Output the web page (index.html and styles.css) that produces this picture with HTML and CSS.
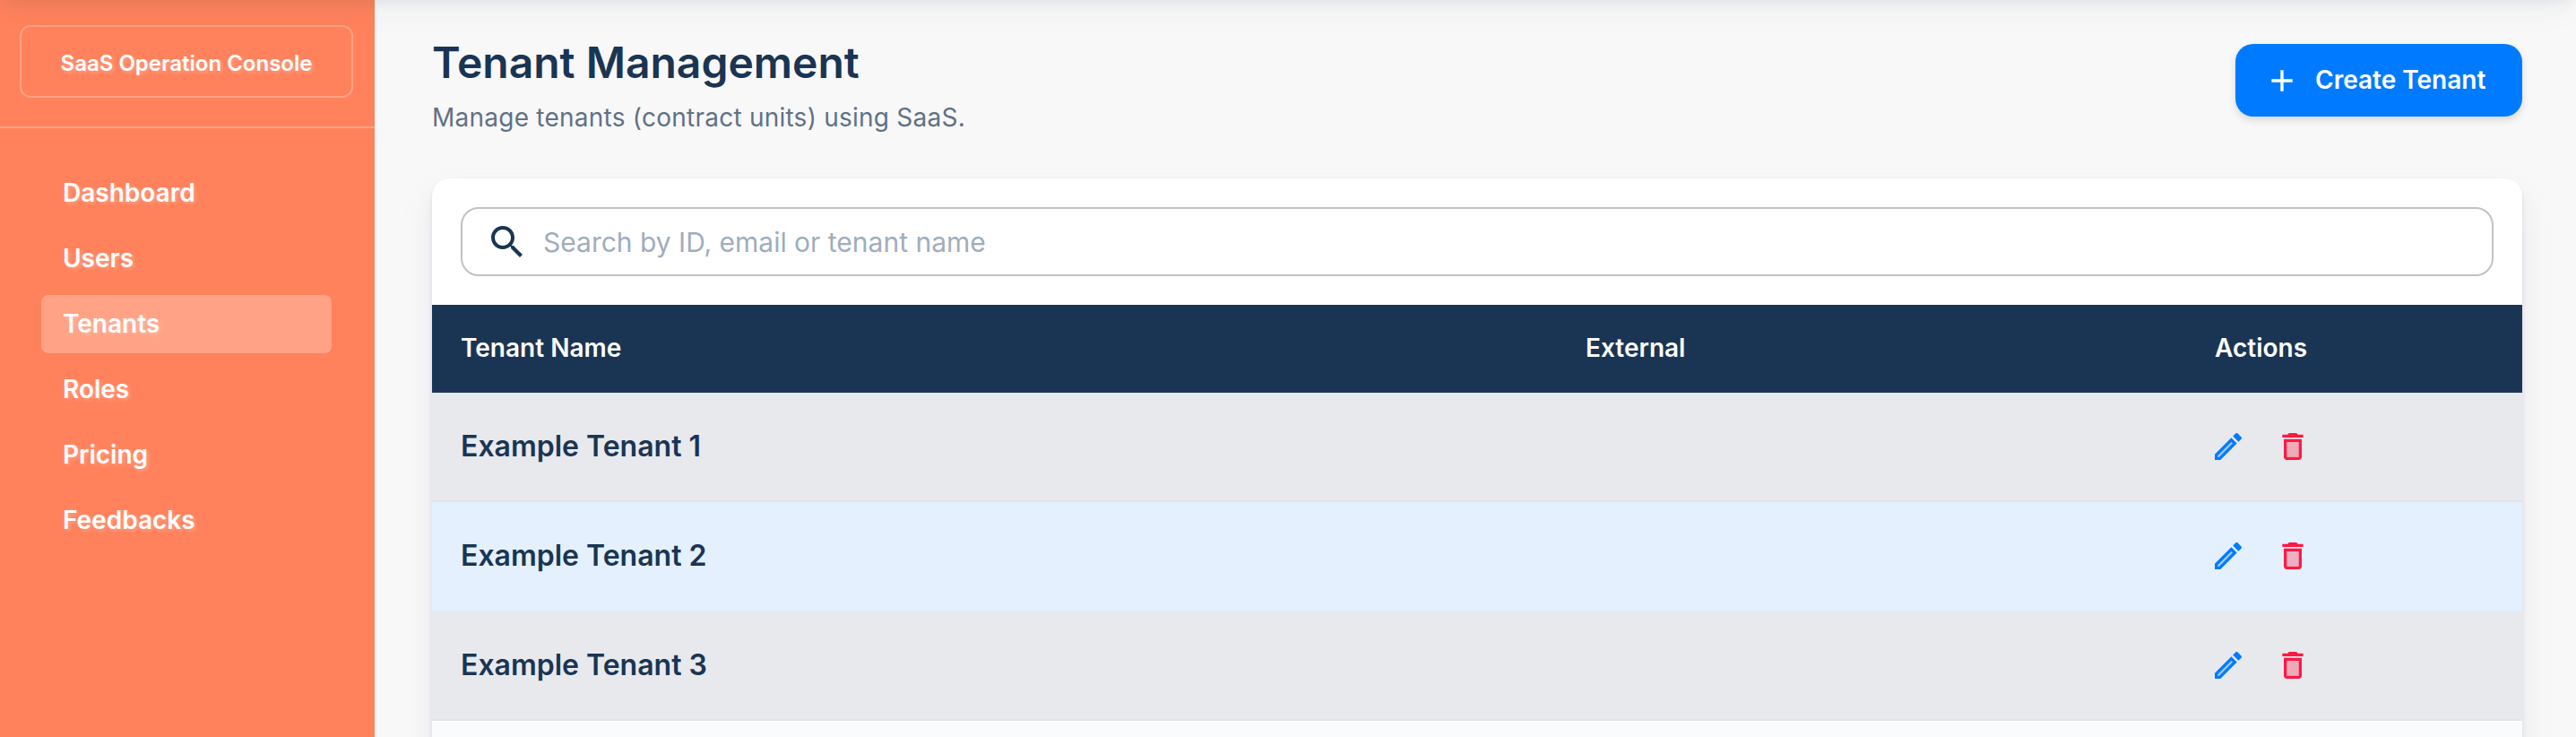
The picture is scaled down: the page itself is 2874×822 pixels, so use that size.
FILE: index.html
```html
<!DOCTYPE html>
<html lang="en">
<head>
<meta charset="utf-8">
<title>Tenant Management</title>
<link rel="stylesheet" href="styles.css">
</head>
<body>
<svg class="sprite" aria-hidden="true">
  <symbol id="edit" viewBox="0 0 24 24">
    <path opacity=".3" d="M5 18.08V19h.92l9.06-9.06-.92-.92z"/>
    <path d="M20.71 7.04a.996.996 0 0 0 0-1.41l-2.34-2.34c-.2-.2-.45-.29-.71-.29s-.51.1-.7.29l-1.83 1.83 3.75 3.75 1.83-1.83zM3 17.25V21h3.75L17.81 9.94l-3.75-3.75L3 17.25zM5.920 19H5v-.92l9.060-9.060.92.920L5.920 19z"/>
  </symbol>
  <symbol id="trash" viewBox="0 0 24 24">
    <path opacity=".3" d="M8 9h8v10H8z"/>
    <path d="M15.5 4l-1-1h-5l-1 1H5v2h14V4zM6 19c0 1.1.9 2 2 2h8c1.100 0 2-.9 2-2V7H6v12zM8 9h8v10H8V9z"/>
  </symbol>
</svg>
<div class="app">
  <div class="topbar"></div>
  <aside class="sidebar">
    <div class="brand"><div class="brand-box"><span>SaaS Operation Console</span></div></div>
    <nav class="nav">
      <a class="nav-item">Dashboard</a>
      <a class="nav-item">Users</a>
      <a class="nav-item active">Tenants</a>
      <a class="nav-item">Roles</a>
      <a class="nav-item">Pricing</a>
      <a class="nav-item">Feedbacks</a>
    </nav>
  </aside>
  <main class="main">
    <header class="page-head">
      <div>
        <h1 class="title"><span>Tenant Management</span></h1>
        <p class="subtitle"><span>Manage tenants (contract units) using SaaS.</span></p>
      </div>
      <button class="create">
        <svg class="icon" viewBox="0 0 24 24"><path d="M19 13h-6v6h-2v-6H5v-2h6V5h2v6h6v2z"/></svg>
        <span>Create Tenant</span>
      </button>
    </header>
    <section class="card">
      <div class="search-wrap">
        <div class="search">
          <svg class="search-icon" viewBox="0 0 24 24"><path d="M15.500 14h-.79l-.28-.27C15.410 12.590 16 11.110 16 9.500 16 5.910 13.090 3 9.500 3S3 5.910 3 9.500 5.910 16 9.500 16c1.610 0 3.090-.59 4.230-1.570l.27.28v.79l5 4.990L20.490 19l-4.990-5zm-6 0C7.010 14 5 11.990 5 9.500S7.010 5 9.500 5 14 7.010 14 9.500 11.990 14 9.500 14z"/></svg>
          <span>Search by ID, email or tenant name</span>
        </div>
      </div>
      <div class="row head"><span>Tenant Name</span><span>External</span><span>Actions</span></div>
      <div class="row"><span class="name">Example Tenant 1</span><span></span><div class="actions"><svg class="icon edit"><use href="#edit"/></svg><svg class="icon trash"><use href="#trash"/></svg></div></div>
      <div class="row hover"><span class="name">Example Tenant 2</span><span></span><div class="actions"><svg class="icon edit"><use href="#edit"/></svg><svg class="icon trash"><use href="#trash"/></svg></div></div>
      <div class="row"><span class="name">Example Tenant 3</span><span></span><div class="actions"><svg class="icon edit"><use href="#edit"/></svg><svg class="icon trash"><use href="#trash"/></svg></div></div>
      <div class="row next"></div>
    </section>
  </main>
</div>
</body>
</html>
```
FILE: styles.css
```css
* { box-sizing: border-box; }
html { height: 822px; overflow: hidden; }
body { margin: 0; font-family: Inter, sans-serif; background: #f8f8f8; color: #1a3553; }
.sprite { display: none; }
.app { position: relative; display: flex; height: 822px; overflow: hidden; }
/* Shadow cast over the page by the bar above the viewport */
.topbar {
  position: absolute; top: -100px; left: 0; right: 0; height: 100px; z-index: 5;
  box-shadow: 0 4px 16px -6px rgba(26, 53, 83, .13), 0 10px 44px -8px rgba(26, 53, 83, .07);
}
.sidebar { flex: none; width: 418px; background: #ff825c; color: #fff; text-shadow: 2px 2px 4px rgba(255, 255, 255, .25); }
.brand { height: 143px; padding: 28px 24px 0 22px; border-bottom: 2px solid #ffa285; }
.brand-box {
  display: flex; align-items: center; justify-content: center; height: 81px;
  border: 2px solid #ffa285; border-radius: 12px;
  font-size: 24px; font-weight: 600; padding-top: 4px;
}
.nav { display: flex; flex-direction: column; gap: 8px; padding: 40px 48px 0 46px; }
.nav-item { display: flex; align-items: center; height: 65px; padding: 0 0 2px 24px; border-radius: 8px; font-size: 28px; font-weight: 600; }
.nav-item.active { background: #ffa285; }
.main { flex: 1; padding: 0 60px 0 64px; }
.page-head { display: flex; justify-content: space-between; height: 199px; padding-top: 49px; }
.title { margin: -8px 0 0; font-size: 48px; line-height: 58px; font-weight: 600; }
.subtitle { margin: 12px 0 0; font-size: 28px; line-height: 40px; letter-spacing: .24px; color: #5f7187; }
.create {
  display: flex; align-items: center; gap: 17px; width: 320px; height: 81px; padding: 0 0 1px 32px;
  border: 0; border-radius: 20px; background: #007bff; color: #fff;
  font-family: inherit; font-size: 28px; font-weight: 600; white-space: nowrap;
  box-shadow: 0 4px 8px rgba(0, 0, 0, .13);
}
.icon { width: 40px; height: 40px; fill: currentColor; flex: none; }
.create .icon { margin-top: 2px; }
.card { background: #fff; border-radius: 20px 20px 0 0; box-shadow: 0 18px 32px rgba(159, 162, 191, .18), 0 4px 4px rgba(159, 162, 191, .32); }
.search-wrap { height: 141px; padding: 32px; }
.search { display: flex; align-items: center; gap: 16px; height: 77px; padding: 1px 0 0 26px; border: 2px solid #c2c2c2; border-radius: 20px; font-size: 30px; color: #a0adbc; }
.search-icon { width: 48px; height: 48px; fill: #1a3553; }
.row { display: grid; grid-template-columns: 1255px 702px 1fr; align-items: center; height: 122px; padding-left: 32px; background: #e8e9ed; border-bottom: 2px solid #e4e5e9; }
.row.head { height: 98px; padding-bottom: 2px; background: #1a3553; border: 0; color: #fff; font-size: 28px; font-weight: 600; }
.row.hover { background: #e4f0fe; border-color: #e1edfb; }
.row.next { background: #fafbfd; }
.name { font-size: 32px; font-weight: 600; margin-bottom: 1px; }
.actions { display: flex; gap: 32px; margin-left: -5px; }
.edit { color: #007bff; }
.trash { color: #ff1943; }
```
